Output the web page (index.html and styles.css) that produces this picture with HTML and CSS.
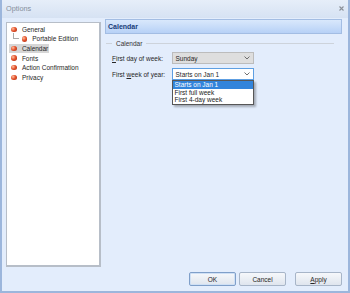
FILE: index.html
```html
<!DOCTYPE html>
<html>
<head>
<meta charset="utf-8">
<link rel="stylesheet" href="styles.css">
</head>
<body>
<div class="window">
  <div class="titlebar">
    <span class="title">Options</span>
    <svg class="close" width="5" height="5" viewBox="0 0 5 5"><path d="M0.5 0.5 L4.5 4.5 M4.5 0.5 L0.5 4.5" stroke="#8a9099" stroke-width="1.1"/></svg>
  </div>
  <div class="main">
    <div class="tree">
      <div class="row"><span class="item"><span class="dot"></span><span>General</span></span></div>
      <div class="row child"><span class="conn"></span><span class="item"><span class="dot"></span><span>Portable Edition</span></span></div>
      <div class="row"><span class="item selected"><span class="dot"></span><span>Calendar</span></span></div>
      <div class="row"><span class="item"><span class="dot"></span><span>Fonts</span></span></div>
      <div class="row"><span class="item"><span class="dot"></span><span>Action Confirmation</span></span></div>
      <div class="row"><span class="item"><span class="dot"></span><span>Privacy</span></span></div>
    </div>
    <div class="content">
      <div class="header">Calendar</div>
      <div class="group"><span class="gl short"></span><span class="gt">Calendar</span><span class="gl long"></span></div>
      <div class="form">
        <div class="frow">
          <span class="label"><u>F</u>irst day of week:</span>
          <div class="combo disabled"><span>Sunday</span><svg width="6" height="4" viewBox="0 0 6 4"><path d="M0.5 0.5 L3 3 L5.5 0.5" fill="none" stroke="#606060" stroke-width="0.9"/></svg></div>
        </div>
        <div class="frow">
          <span class="label">First <u>w</u>eek of year:</span>
          <div class="combo focus"><span>Starts on Jan 1</span><svg width="6" height="4" viewBox="0 0 6 4"><path d="M0.5 0.5 L3 3 L5.5 0.5" fill="none" stroke="#606060" stroke-width="0.9"/></svg>
            <div class="list">
              <div class="opt sel">Starts on Jan 1</div>
              <div class="opt">First full week</div>
              <div class="opt">First 4-day week</div>
            </div>
          </div>
        </div>
      </div>
    </div>
  </div>
  <div class="footer">
    <button class="btn default">OK</button>
    <button class="btn">Cancel</button>
    <button class="btn apply"><u>A</u>pply</button>
  </div>
</div>
</body>
</html>
```

FILE: styles.css
```css
html, body {
  margin: 0;
  padding: 0;
  background: #ffffff;
}

.window {
  width: 350px;
  height: 293px;
  box-sizing: border-box;
  background: #e3edfc;
  border: 2px solid #9cb6dc;
  border-top: 0;
  display: flex;
  flex-direction: column;
  font-family: "Liberation Sans", Arial, sans-serif;
  font-size: 6.5px;
  color: #262626;
  overflow: hidden;
}

.titlebar {
  height: 18px;
  flex: none;
  display: flex;
  align-items: center;
  justify-content: space-between;
  padding: 0 4px 2px 4px;
  box-sizing: border-box;
  background: linear-gradient(#e6eef9, #d6e2f3);
}

.title {
  font-size: 7.3px;
  color: #858e9b;
}

.main {
  display: flex;
  align-items: flex-start;
  gap: 4px;
  padding-left: 4px;
  height: 249px;
  flex: none;
}

.tree {
  width: 95px;
  height: 245px;
  margin-top: 4px;
  box-sizing: border-box;
  background: #ffffff;
  border: 1px solid #b7bec8;
  border-right-width: 2px;
  border-bottom-width: 2px;
  padding-top: 1.5px;
}

.row {
  height: 9.6px;
  display: flex;
  align-items: center;
  padding-left: 1.7px;
}

.row.child {
  padding-left: 7px;
}

.conn {
  align-self: flex-start;
  width: 5px;
  height: 4.6px;
  margin-top: -1px;
  border-left: 1px solid #a9a9a9;
  border-bottom: 1px solid #a9a9a9;
  margin-left: -1px;
}

.item {
  display: flex;
  align-items: center;
  height: 8.4px;
  padding: 0 1px 0 2.5px;
  gap: 5.2px;
}

.item.selected {
  background: #d6d6d6;
}

.dot {
  width: 5.5px;
  height: 5.5px;
  border-radius: 50%;
  background: radial-gradient(circle at 35% 35%, #ffc0a0 0, #e4552f 45%, #a9280f 100%);
  flex: none;
}

.content {
  flex: 1;
  margin-top: 1px;
  margin-right: 6px;
  position: relative;
}

.header {
  height: 15px;
  box-sizing: border-box;
  border: 1px solid #a3bde3;
  background: linear-gradient(#d9e8fc, #b7d1f6);
  font-weight: bold;
  font-size: 7px;
  color: #173b78;
  display: flex;
  align-items: center;
  padding-left: 2px;
}

.group {
  display: flex;
  align-items: center;
  height: 8px;
  margin-top: 5px;
  padding-left: 1px;
  padding-right: 8px;
}

.gl {
  height: 1px;
  background: #cdd3db;
}

.gl.short {
  width: 6px;
}

.gl.long {
  flex: 1;
}

.gt {
  padding: 0 4px;
  color: #333;
}

.form {
  margin-top: 5px;
  padding-left: 7px;
  display: flex;
  flex-direction: column;
  gap: 4px;
}

.frow {
  display: flex;
  align-items: center;
  height: 12px;
}

.label {
  width: 60px;
  flex: none;
  color: #262626;
}

.combo {
  width: 82px;
  height: 12px;
  box-sizing: border-box;
  display: flex;
  align-items: center;
  justify-content: space-between;
  padding: 0 3px 0 2.5px;
  position: relative;
  color: #1f1f1f;
}

.combo.disabled {
  background: #dedede;
  border: 1px solid #bcbcbc;
}

.combo.focus {
  background: #ffffff;
  border: 1px solid #5e9fe2;
}

.list {
  position: absolute;
  left: -1px;
  top: 11px;
  width: 82px;
  box-sizing: border-box;
  background: #ffffff;
  border: 1px solid #575757;
  box-shadow: 2px 2px 2px rgba(0, 0, 0, 0.28);
}

.opt {
  height: 7.7px;
  line-height: 7.7px;
  padding-left: 1.5px;
  color: #1a1a1a;
}

.opt.sel {
  background: #3284db;
  color: #ffffff;
}

.footer {
  display: flex;
  justify-content: flex-end;
  margin-top: 5px;
  padding-right: 6px;
  height: 14px;
}

.btn {
  width: 47px;
  height: 14px;
  margin: 0;
  padding: 0;
  font-family: "Liberation Sans", Arial, sans-serif;
  font-size: 6.5px;
  color: #262626;
  border: 1px solid #a7b5c8;
  border-radius: 2px;
  background: linear-gradient(#f6f8fb, #dfe5ee);
}

.btn.default {
  border-color: #7f9fc9;
  box-shadow: inset 0 0 0 1px #cfe0f5;
  margin-right: 3px;
}

.btn.apply {
  margin-left: 9px;
}

u {
  text-decoration-thickness: 0.6px;
}
```
